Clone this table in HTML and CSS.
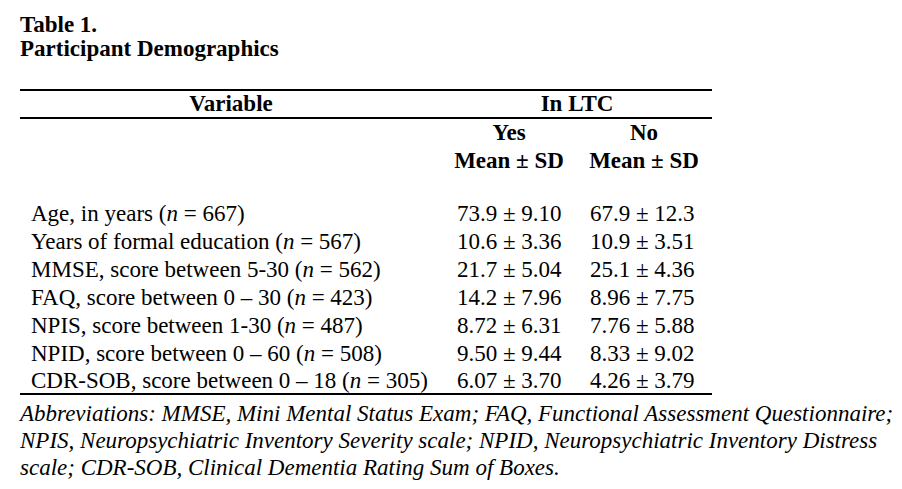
FILE: index.html
```html
<!DOCTYPE html>
<html>
<head>
<meta charset="utf-8">
<link rel="stylesheet" href="styles.css">
</head>
<body>
<div class="page">
  <h1 class="title">Table 1.<br>Participant Demographics</h1>
  <table class="demo">
    <colgroup>
      <col class="c-var">
      <col class="c-yes">
      <col class="c-no">
    </colgroup>
    <thead>
      <tr class="h1">
        <th class="th-var">Variable</th>
        <th colspan="2" class="th-ltc">In LTC</th>
      </tr>
      <tr class="h2">
        <th></th>
        <th class="th-sub">Yes</th>
        <th class="th-sub">No</th>
      </tr>
      <tr class="h2">
        <th></th>
        <th class="th-sub">Mean ± SD</th>
        <th class="th-sub">Mean ± SD</th>
      </tr>
      <tr class="gap"><td colspan="3"></td></tr>
    </thead>
    <tbody>
      <tr><td class="var">Age, in years (<i>n</i> = 667)</td><td class="val v1">73.9 ± 9.10</td><td class="val v2">67.9 ± 12.3</td></tr>
      <tr><td class="var">Years of formal education (<i>n</i> = 567)</td><td class="val v1">10.6 ± 3.36</td><td class="val v2">10.9 ± 3.51</td></tr>
      <tr><td class="var">MMSE, score between 5-30 (<i>n</i> = 562)</td><td class="val v1">21.7 ± 5.04</td><td class="val v2">25.1 ± 4.36</td></tr>
      <tr><td class="var">FAQ, score between 0 – 30 (<i>n</i> = 423)</td><td class="val v1">14.2 ± 7.96</td><td class="val v2">8.96 ± 7.75</td></tr>
      <tr><td class="var">NPIS, score between 1-30 (<i>n</i> = 487)</td><td class="val v1">8.72 ± 6.31</td><td class="val v2">7.76 ± 5.88</td></tr>
      <tr><td class="var">NPID, score between 0 – 60 (<i>n</i> = 508)</td><td class="val v1">9.50 ± 9.44</td><td class="val v2">8.33 ± 9.02</td></tr>
      <tr class="last"><td class="var">CDR-SOB, score between 0 – 18 (<i>n</i> = 305)</td><td class="val v1">6.07 ± 3.70</td><td class="val v2">4.26 ± 3.79</td></tr>
    </tbody>
  </table>
  <p class="note">Abbreviations: MMSE, Mini Mental Status Exam; FAQ, Functional Assessment Questionnaire; NPIS, Neuropsychiatric Inventory Severity scale; NPID, Neuropsychiatric Inventory Distress scale; CDR-SOB, Clinical Dementia Rating Sum of Boxes.</p>
</div>
</body>
</html>
```
FILE: styles.css
```css
html, body {
  margin: 0;
  padding: 0;
  background: #fff;
}
body {
  font-family: "Liberation Serif", "Times New Roman", serif;
  color: #000;
}
.page {
  padding: 13px 0 0 20px;
}
.title {
  margin: 0;
  font-size: 23px;
  line-height: 24px;
  font-weight: bold;
}
.demo {
  margin-top: 28px;
  border-collapse: collapse;
  width: 692px;
  table-layout: fixed;
  font-size: 23px;
}
.c-var { width: 422px; }
.c-yes { width: 134px; }
.c-no { width: 136px; }
.demo th,
.demo td {
  padding: 0;
  white-space: nowrap;
}
.demo .h1 th {
  border-top: 2px solid #000;
  border-bottom: 2px solid #000;
  height: 26px;
  line-height: 26px;
  font-weight: bold;
  text-align: center;
}
.demo .h2 th {
  height: 28px;
  line-height: 28px;
  font-weight: bold;
  text-align: center;
}
.demo .gap td { height: 25px; }
.demo tbody td {
  height: 28px;
  line-height: 28px;
}
.demo td.var { padding-left: 11px; }
.demo td.v1 { padding-left: 15px; }
.demo td.v2 { padding-left: 14px; }
.demo .last td {
  border-bottom: 2px solid #000;
  line-height: 25px;
  height: 24px;
}
.note {
  margin: 5px 0 0 0;
  width: 875px;
  font-size: 23px;
  line-height: 27px;
  font-style: italic;
}
```
